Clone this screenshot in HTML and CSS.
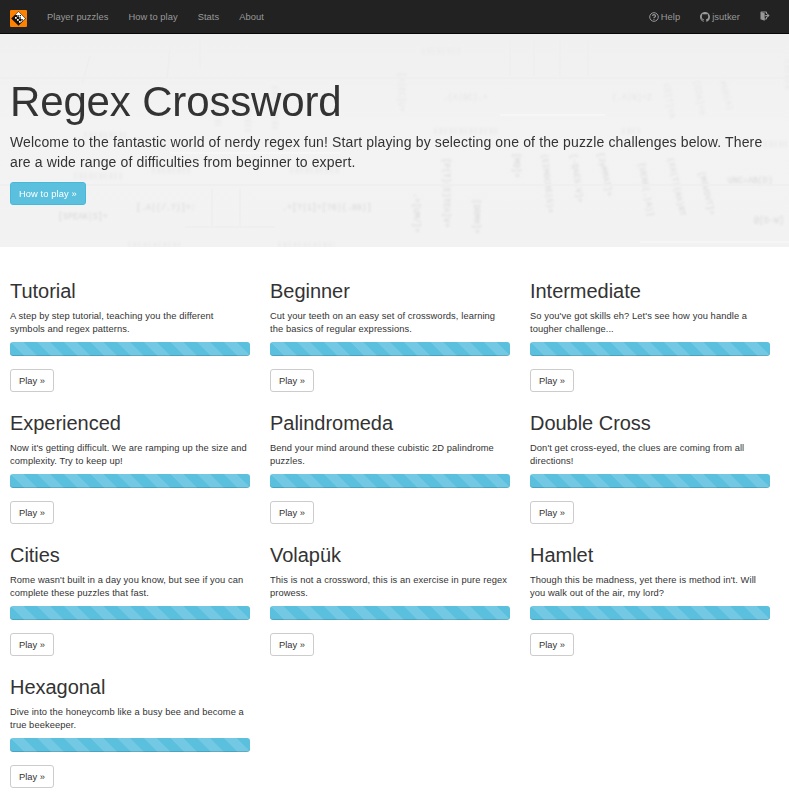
FILE: index.html
```html
<!DOCTYPE html>
<html lang="en">
<head>
<meta charset="utf-8">
<title>Regex Crossword</title>
<link rel="stylesheet" href="styles.css">
</head>
<body>
<nav class="navbar">
  <a class="brand" href="#"><svg width="17" height="17" viewBox="0 0 17 17"><rect width="17" height="17" rx="1" fill="#ff8100"/><path d="M8.500 1.200 15.800 8.500 8.500 15.800 1.200 8.500z" fill="#1a1208"/><path d="M8.500 1.800 15.200 8.500 13 10.700H11V9H9V7H7V5H5.300z" fill="#fff"/><path d="M5 7h1.700v1.700H5zM7 9h1.700v1.700H7zM9 11h1.700v1.700H9zM11 10.700h1.500L11 12.200z" fill="#fff"/><path d="M7.300 5.200h1.600v1.600H7.300zM9.300 7.200h1.600v1.600H9.300zM11.300 9h1.400v1.400h-1.400zM9.700 5h1.300v1.300H9.700z" fill="#1a1208"/></svg></a>
  <a href="#">Player puzzles</a>
  <a href="#">How to play</a>
  <a href="#">Stats</a>
  <a href="#">About</a>
  <span class="spacer"></span>
  <a href="#" class="with-icon"><svg width="10" height="10" viewBox="0 0 10 10"><circle cx="5" cy="5" r="4.300" fill="none" stroke="#999" stroke-width="1"/><path d="M3.500 3.900Q3.700 2.700 5 2.700T6.500 3.900Q6.500 4.600 5.700 5 5 5.300 5 6M5 6.700v1" fill="none" stroke="#999" stroke-width="1.200"/></svg>Help</a>
  <a href="#" class="with-icon"><svg width="10" height="10" viewBox="0 0 16 16"><path fill="#999" d="M8 0C3.580 0 0 3.580 0 8c0 3.540 2.290 6.530 5.470 7.590.4.070.55-.17.55-.38v-1.490C3.780 14.200 3.310 12.650 3.310 12.650c-.36-.92-.89-1.170-.89-1.170-.73-.5.060-.49.060-.49.800.06 1.230.83 1.230.83.710 1.230 1.870.87 2.330.66.070-.52.280-.87.510-1.070-1.780-.2-3.640-.89-3.640-3.950 0-.87.310-1.590.82-2.150-.08-.2-.36-1.020.08-2.120 0 0 .67-.21 2.200.82a7.600 7.600 0 0 1 4 0c1.530-1.040 2.200-.82 2.200-.82.440 1.100.16 1.920.080 2.120.51.560.82 1.270.82 2.150 0 3.070-1.870 3.750-3.650 3.950.29.250.54.730.54 1.480v2.190c0 .21.150.46.550.38A8 8 0 0 0 16 8c0-4.420-3.580-8-8-8z"/></svg>jsutker</a>
  <a href="#" class="exit"><svg width="10" height="10" viewBox="0 0 10 10"><path d="M1 1h5.500v2M6.500 6v2H4" fill="none" stroke="#999"/><path d="M.5.7 4.700 2.200V9.800L.5 8.200z" fill="#999"/><path d="M5.200 3.900h2V2.300L9.600 4.600 7.200 6.900V5.300h-2z" fill="#999"/></svg></a>
</nav>
<header class="hero">
  <svg class="backdrop" width="789" height="213" viewBox="0 0 789 213">
    <g class="scribble">
      <text x="58" y="185">[SPEAK|S]+</text><text x="136" y="176">[.A|(/.?)]+:</text><text x="282" y="176">.+[?|1]+[?6|(.88)]</text>
      <text x="728" y="149">UNC=AB(D)</text><text x="754" y="189">@[D-W]</text>
      <text transform="translate(414 159) rotate(90)">.+[UM/]+</text><text transform="translate(444 124) rotate(90)">[P(T)(E)TEA]V+</text>
      <text transform="translate(474 165) rotate(90)">[DRMH]+</text><text transform="translate(514 119) rotate(90)">[MD]+</text>
      <text transform="translate(542 120) rotate(84)">(EIMOCRE|S)+</text><text transform="translate(571 120) rotate(82)">[-QAES.V]+</text>
      <text transform="translate(598 119) rotate(78)">[JyMMAT]+</text><text transform="translate(639 129) rotate(80)">[UERE(.|A)]</text>
      <text transform="translate(668 124) rotate(78)">(XX(T|(HA)RT</text><text transform="translate(699 138) rotate(76)">[MOVOVT]+</text>
    </g>
    <g class="scribble faint">
      <text x="443" y="66">.(A|BC).+</text><text x="612" y="66">(.A|N)+Z</text>
      <text transform="translate(664 50) rotate(80)">CE[T]+A</text><text transform="translate(694 47) rotate(80)">[EDA]+H</text><text transform="translate(720 48) rotate(74)">MUO(A)</text>
      <text transform="translate(399 38) rotate(90)">[A|EC]U+</text>
    </g>
    <path class="smudge" d="M84 101H126M434 97H498M622 97H640M764 110H789M74 142H122M152 136H190M290 136H340M128 211H180M278 211H334M218 70v22M248 70v28M275 52v44M788 26v30M422 17H460"/>
    <path class="rules" d="M0 44H789M510 5V42M534 5V42M560 5V42M588 5V42M90 22 82 50M170 15l-3 30M200 4v30M0 151H789M185 193H275M212 155v38M240 155v38"/>
    <path class="light" d="M500 81H605M170 119H340M640 208H789"/>
  </svg>
  <div class="hero-body">
    <h1>Regex Crossword</h1>
    <p>Welcome to the fantastic world of nerdy regex fun! Start playing by selecting one of the puzzle challenges below. There<br>are a wide range of difficulties from beginner to expert.</p>
    <a class="btn btn-info" href="#">How to play »</a>
  </div>
</header>
<main class="grid">
  <section><h2>Tutorial</h2><p>A step by step tutorial, teaching you the different<br>symbols and regex patterns.</p><div class="progress"></div><a class="btn" href="#">Play »</a></section>
  <section><h2>Beginner</h2><p>Cut your teeth on an easy set of crosswords, learning<br>the basics of regular expressions.</p><div class="progress"></div><a class="btn" href="#">Play »</a></section>
  <section><h2>Intermediate</h2><p>So you've got skills eh? Let's see how you handle a<br>tougher challenge...</p><div class="progress"></div><a class="btn" href="#">Play »</a></section>
  <section><h2>Experienced</h2><p>Now it's getting difficult. We are ramping up the size and<br>complexity. Try to keep up!</p><div class="progress"></div><a class="btn" href="#">Play »</a></section>
  <section><h2>Palindromeda</h2><p>Bend your mind around these cubistic 2D palindrome<br>puzzles.</p><div class="progress"></div><a class="btn" href="#">Play »</a></section>
  <section><h2>Double Cross</h2><p>Don't get cross-eyed, the clues are coming from all<br>directions!</p><div class="progress"></div><a class="btn" href="#">Play »</a></section>
  <section><h2>Cities</h2><p>Rome wasn't built in a day you know, but see if you can<br>complete these puzzles that fast.</p><div class="progress"></div><a class="btn" href="#">Play »</a></section>
  <section><h2>Volapük</h2><p>This is not a crossword, this is an exercise in pure regex<br>prowess.</p><div class="progress"></div><a class="btn" href="#">Play »</a></section>
  <section><h2>Hamlet</h2><p>Though this be madness, yet there is method in't. Will<br>you walk out of the air, my lord?</p><div class="progress"></div><a class="btn" href="#">Play »</a></section>
  <section><h2>Hexagonal</h2><p>Dive into the honeycomb like a busy bee and become a<br>true beekeeper.</p><div class="progress"></div><a class="btn" href="#">Play »</a></section>
</main>
</body>
</html>
```
FILE: styles.css
```css
* { box-sizing: border-box; }
body { margin: 0; background: #fff; color: #333; font: 9.33px/13px "Liberation Sans", Arial, sans-serif; letter-spacing: 0.09px; overflow: hidden; height: 801px; }
h1, h2, p { margin: 0; font-weight: 400; }
a { text-decoration: none; }
.navbar { display: flex; height: 34px; align-items: center; padding: 1px 19px 0 10px; background: #222; border-bottom: 1px solid #080808; gap: 20px; letter-spacing: 0.05px; }
.navbar a { color: #999; white-space: nowrap; }
.navbar svg { display: block; }
.navbar .brand { padding-top: 3px; }
.navbar .exit { padding-bottom: 2px; }
.with-icon { display: flex; align-items: center; gap: 2px; }
.spacer { flex: 1; }
.hero { position: relative; height: 213px; background: linear-gradient(#f0f0f0, #f3f3f3 45%, #f2f2f2); overflow: hidden; }
.backdrop { position: absolute; left: 0; top: 0; }
.scribble { font: 8.3px "Liberation Mono", monospace; letter-spacing: 0; fill: #d8d8d8; filter: blur(0.8px); }
.faint { fill: #e6e6e6; }
.smudge { fill: none; stroke: #ededed; stroke-width: 6; stroke-dasharray: 3 2 4 1; filter: blur(1.2px); }
.rules { fill: none; stroke: #eee; stroke-width: 1.5; filter: blur(0.7px); }
.light { fill: none; stroke: #f6f6f6; stroke-width: 2; filter: blur(0.7px); }
.hero-body { position: relative; padding: 47px 10px 0; }
.hero h1 { font-size: 42px; line-height: 42px; margin-bottom: 9px; letter-spacing: -0.15px; }
.hero p { font-size: 14px; line-height: 20px; margin-bottom: 10px; letter-spacing: 0.14px; white-space: nowrap; }
.btn { display: inline-block; height: 23px; padding: 4px 8px; border: 1px solid #ccc; border-radius: 3px; color: #333; background: #fff; white-space: nowrap; vertical-align: top; line-height: 14px; letter-spacing: 0; }
.btn-info { color: #fff; background: #5bc0de; border-color: #46b8da; letter-spacing: 0.09px; }
.grid { display: grid; grid-template-columns: repeat(3, 240px); gap: 20px; padding: 33px 10px 0; }
.grid section { height: 112px; }
.grid h2 { font-size: 20px; line-height: 22px; margin-bottom: 8px; letter-spacing: -0.03px; }
.grid p { height: 26px; margin-bottom: 6px; white-space: nowrap; }
.progress { height: 14px; margin-bottom: 13px; border-radius: 3px; background: linear-gradient(45deg, rgba(255,255,255,.15) 25%, transparent 25%, transparent 50%, rgba(255,255,255,.15) 50%, rgba(255,255,255,.15) 75%, transparent 75%) 0 0 / 26.67px 26.67px #5bc0de; box-shadow: inset 0 -1px 0 rgba(0,0,0,.15); }
```
